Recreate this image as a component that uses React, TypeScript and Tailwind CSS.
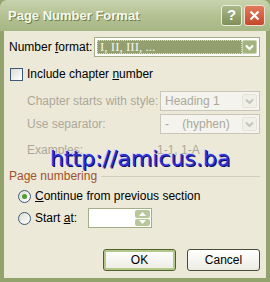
import React from 'react';

const font = { fontFamily: '"Liberation Sans", Arial, sans-serif' };

function Chevron({ color }: { color: string }) {
  return (
    <svg width="9" height="7" viewBox="0 0 9 7">
      <path d="M1 1.5 L4.5 5 L8 1.5" fill="none" stroke={color} strokeWidth="2" />
    </svg>
  );
}

function Combo({ text, disabled }: { text: string; disabled?: boolean }) {
  return (
    <div
      className={
        'flex h-[20px] items-stretch border p-[2px] ' +
        (disabled ? 'border-[#c9c7ba] bg-[#f4f3ee]' : 'border-[#a3ae86] bg-white')
      }
    >
      {disabled ? (
        <div className="flex flex-1 items-center whitespace-pre pl-[2px] text-[12px] text-[#aca899]">{text}</div>
      ) : (
        <div className="flex flex-1 items-center border border-dotted border-[#d8dcc8] bg-[#939f6e] pl-[2px] text-[13px] text-[#f2f4ea]" style={{ fontFamily: '"Liberation Serif", serif' }}>
          {text}
        </div>
      )}
      <div
        className={
          'flex w-[15px] items-center justify-center rounded-[2px] border ' +
          (disabled ? 'border-[#e4e3d8] bg-[#f0efe8]' : 'border-[#c6d2ad] bg-[#a4b480]')
        }
      >
        <Chevron color={disabled ? '#c6c5b8' : '#ffffff'} />
      </div>
    </div>
  );
}

function Radio({ checked }: { checked?: boolean }) {
  return (
    <div className="flex h-[13px] w-[13px] items-center justify-center rounded-full border border-[#3e5a7a] bg-gradient-to-br from-[#dcdcd4] to-white">
      {checked && <div className="h-[5px] w-[5px] rounded-full bg-[#4f9c33]" />}
    </div>
  );
}

export default function App() {
  return (
    <div className="flex h-[282px] w-[270px] flex-col overflow-hidden bg-[#93a36e]" style={font}>
      <div className="flex h-[31px] items-center justify-between rounded-t-[7px] bg-gradient-to-b from-[#c8d3ad] via-[#b4c293] to-[#a7b685] pl-[8px] pr-[5px]">
        <span className="text-[13px] font-bold text-[#f6f8ee]" style={{ textShadow: '1px 1px 0 #6f7f4c' }}>
          Page Number Format
        </span>
        <div className="flex gap-[2px]">
          <div className="flex h-[21px] w-[21px] items-center justify-center rounded-[3px] border border-[#e8eedb] bg-gradient-to-b from-[#a9b88a] to-[#7e8f58] text-[15px] font-bold text-white">
            ?
          </div>
          <div className="flex h-[21px] w-[21px] items-center justify-center rounded-[3px] border border-[#f3dcd2] bg-gradient-to-b from-[#e07a5a] to-[#c4482a]">
            <svg width="11" height="11" viewBox="0 0 11 11">
              <path d="M1.5 1.5 L9.5 9.5 M9.5 1.5 L1.5 9.5" stroke="#fff" strokeWidth="2.2" />
            </svg>
          </div>
        </div>
      </div>
      <div className="relative mx-[4px] mb-[4px] flex flex-1 flex-col bg-[#ece9d8] pl-[5px] pr-[6px] text-[12px] text-black">
        <div className="mt-[6px] flex h-[20px] items-center">
          <span className="w-[85px]">
            Number <u>f</u>ormat:
          </span>
          <div className="flex-1">
            <Combo text="I, II, III, ..." />
          </div>
        </div>
        <div className="mt-[7px] flex h-[20px] items-center gap-[4px] pl-[1px]">
          <div className="h-[13px] w-[13px] border border-[#3e5a7a] bg-gradient-to-br from-[#dcdcd4] to-white" />
          <span>
            Include chapter <u>n</u>umber
          </span>
        </div>
        <div className="mt-[7px] flex h-[20px] items-center pl-[18px] text-[#aca899]">
          <span className="w-[133px]">Chapter starts with style:</span>
          <div className="flex-1">
            <Combo text="Heading 1" disabled />
          </div>
        </div>
        <div className="mt-[3px] flex h-[20px] items-center pl-[18px] text-[#aca899]">
          <span className="w-[133px]">Use separator:</span>
          <div className="flex-1">
            <Combo text="-    (hyphen)" disabled />
          </div>
        </div>
        <div className="mt-[7px] flex h-[18px] items-center pl-[18px] text-[#aca899]">
          <span className="w-[130px]">Examples:</span>
          <span>1-1, 1-A</span>
        </div>
        <div className="mt-[9px] flex h-[16px] items-center gap-[4px]">
          <span className="text-[#a0522d]">Page numbering</span>
          <div className="h-[1px] flex-1 bg-[#d0d0bf]" />
        </div>
        <div className="mt-[4px] flex h-[16px] items-center gap-[4px] pl-[9px]">
          <Radio checked />
          <span>
            <u>C</u>ontinue from previous section
          </span>
        </div>
        <div className="mt-[4px] flex h-[20px] items-center pl-[9px]">
          <Radio />
          <span className="ml-[4px] w-[53px]">
            Start <u>a</u>t:
          </span>
          <div className="flex h-[20px] w-[64px] items-stretch border border-[#a3ae86] bg-white p-[1px]">
            <div className="flex-1" />
            <div className="flex w-[15px] flex-col gap-[1px]">
              <div className="flex flex-1 items-center justify-center rounded-[2px] bg-[#b8c79a]">
                <svg width="7" height="4" viewBox="0 0 7 4">
                  <path d="M0 4 L3.5 0 L7 4 Z" fill="#fff" />
                </svg>
              </div>
              <div className="flex flex-1 items-center justify-center rounded-[2px] bg-[#b8c79a]">
                <svg width="7" height="4" viewBox="0 0 7 4">
                  <path d="M0 0 L3.5 4 L7 0 Z" fill="#fff" />
                </svg>
              </div>
            </div>
          </div>
        </div>
        <div className="mt-[21px] flex justify-end gap-[11px]">
          <button className="h-[22px] w-[73px] rounded-[3px] border border-[#4f6128] bg-gradient-to-b from-white to-[#ecebe3] text-[12px] shadow-[inset_0_0_0_2px_#b3c98c]">
            OK
          </button>
          <button className="h-[22px] w-[73px] rounded-[3px] border border-[#4a4a38] bg-gradient-to-b from-white to-[#ecebe3] text-[12px]">
            Cancel
          </button>
        </div>
        <div
          className="pointer-events-none absolute left-[46px] top-[117px] text-[22px] leading-none text-[#2c2fd4]"
          style={{ fontFamily: '"DejaVu Sans", sans-serif', textShadow: '1px 1px 0 #0c0c60, -1px -1px 0 #d4d4f2' }}
        >
          http://amicus.ba
        </div>
      </div>
    </div>
  );
}
